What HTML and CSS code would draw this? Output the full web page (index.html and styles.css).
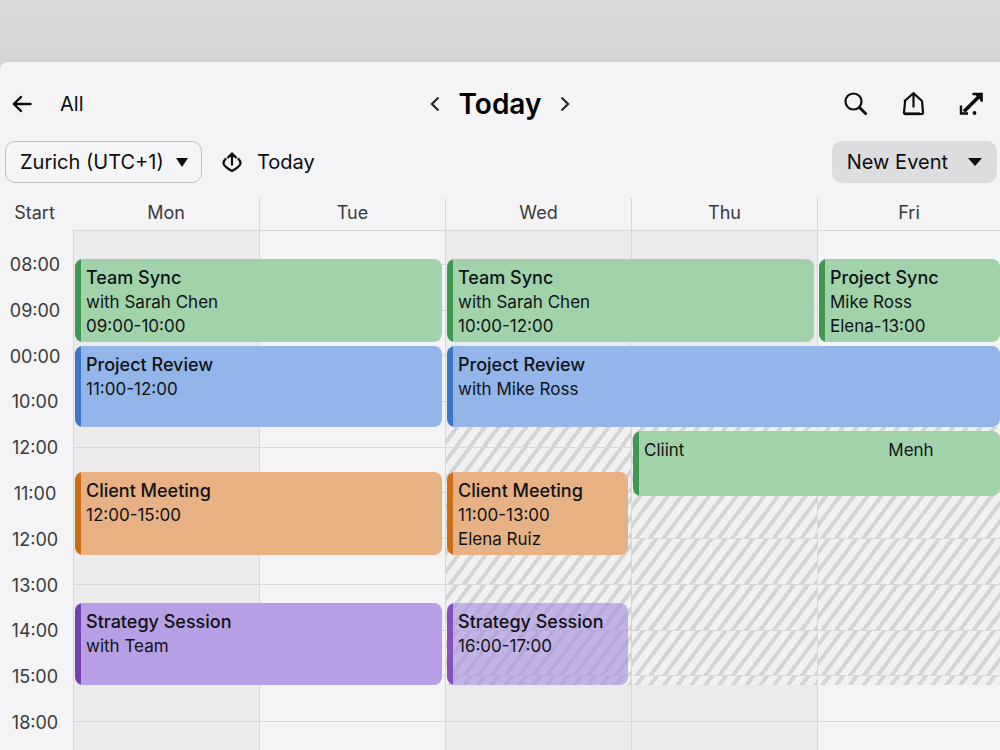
FILE: index.html
```html
<!DOCTYPE html>
<html lang="en">
<head>
<meta charset="utf-8">
<meta name="viewport" content="width=device-width, initial-scale=1">
<title>Calendar</title>
<link rel="stylesheet" href="styles.css">
</head>
<body>
<main class="panel">
  <header class="topbar">
    <div class="topbar-left">
      <button class="icon-button" aria-label="Back">
        <svg width="22" height="22" viewBox="0 0 22 22" fill="none" stroke="currentColor" stroke-width="2.4" stroke-linejoin="round" stroke-linecap="round"><path d="M18.500 11H2M9 4L1.800 11 9 18"/></svg>
      </button>
      <a class="all-link" href="#">All</a>
    </div>
    <div class="topbar-title">
      <button class="icon-button chevron" aria-label="Previous">
        <svg width="12" height="18" viewBox="0 0 12 18" fill="none" stroke="currentColor" stroke-width="2.400"><path d="M9.500 2.500L3 9l6.500 6.500"/></svg>
      </button>
      <h1>Today</h1>
      <button class="icon-button chevron" aria-label="Next">
        <svg width="12" height="18" viewBox="0 0 12 18" fill="none" stroke="currentColor" stroke-width="2.400"><path d="M2.500 2.500L9 9l-6.500 6.500"/></svg>
      </button>
    </div>
    <div class="topbar-actions">
      <button class="icon-button" aria-label="Search">
        <svg width="26" height="26" viewBox="0 0 26 26" fill="none" stroke="currentColor" stroke-width="2.200"><circle cx="11.500" cy="10.500" r="8"/><path d="M17 16l7.500 7.500" stroke-width="2.800"/></svg>
      </button>
      <button class="icon-button" aria-label="Share">
        <svg width="26" height="26" viewBox="0 0 26 26" fill="none" stroke="currentColor" stroke-width="2.200"><path d="M13.500 16.500V3M4 10.500L13.500 2.200l9 8.300M5.200 9.500L4 21.500Q4 23 5.500 23H21.500Q23 23 23 21.500L22 9.500"/><path d="M4.500 22.800H20" stroke-width="2.800"/></svg>
      </button>
      <button class="icon-button" aria-label="Expand">
        <svg width="26" height="26" viewBox="0 0 26 26" fill="none" stroke="currentColor" stroke-width="2.400"><path d="M6 20.500L21 5.500" stroke-width="3.600"/><path d="M14.500 3H23.500V10.500M3 14.500V22.500H10"/><path d="M24.500 2v9l-9-9z" fill="currentColor" stroke="none"/><circle cx="16.500" cy="22" r="1.900" fill="currentColor" stroke="none"/></svg>
      </button>
    </div>
  </header>

  <div class="toolbar">
    <div class="zone">
      <select class="zone-select" aria-label="Time zone"><option>Zurich (UTC+1)</option></select>
      <svg class="zone-caret" width="12" height="9" viewBox="0 0 12 9"><path d="M0 0h12L6 9z" fill="currentColor"/></svg>
    </div>
    <button class="today-button">
      <svg width="22" height="22" viewBox="0 0 22 22" fill="none" stroke="currentColor" stroke-width="2.200"><path d="M11 14.500V3M6.500 7L11 2.500 15.500 7M5.500 7.500Q2.500 9 2.500 12.500 3 15.500 11 20 19 15.500 19.500 12.500 19.500 9 16.500 7.500"/></svg>
      Today
    </button>
    <button class="new-event">
      New Event
      <svg width="14" height="8" viewBox="0 0 14 8"><path d="M0 0h14L7 8z" fill="currentColor"/></svg>
    </button>
  </div>

  <section class="calendar" aria-label="Week">
    <div class="days">
      <span class="start">Start</span>
      <span>Mon</span><span>Tue</span><span>Wed</span><span>Thu</span><span>Fri</span>
    </div>
    <div class="times">
      <time>08:00</time><time>09:00</time><time>00:00</time><time>10:00</time><time>12:00</time><time>11:00</time><time>12:00</time><time>13:00</time><time>14:00</time><time>15:00</time><time>18:00</time>
    </div>
    <div class="board">
      <div class="layer columns"><i class="shade"></i><i></i><i class="shade"></i><i class="shade"></i><i></i></div>
      <div class="layer schedule">
        <div class="hatch wed"><i></i><i></i><i></i><i></i><i></i><i></i><i></i></div>
        <div class="hatch thu"><i></i><i></i><i></i><i></i><i></i><i></i><i></i></div>
        <div class="hatch fri"><i></i><i></i><i></i><i></i><i></i><i></i><i></i></div>
      </div>
      <div class="layer lines"><i></i><i></i><i></i><i></i><i></i><i></i><i></i><i></i><i></i><i></i><i></i></div>
      <div class="layer schedule">
        <article class="event green mon-tue sync"><h2>Team Sync</h2><p>with Sarah Chen</p><p>09:00-10:00</p></article>
        <article class="event green wed-thu sync"><h2>Team Sync</h2><p>with Sarah Chen</p><p>10:00-12:00</p></article>
        <article class="event green fri sync to-edge"><h2>Project Sync</h2><p>Mike Ross</p><p>Elena-13:00</p></article>
        <article class="event blue mon-tue review"><h2>Project Review</h2><p>11:00-12:00</p></article>
        <article class="event blue wed-fri review to-edge"><h2>Project Review</h2><p>with Mike Ross</p></article>
        <article class="event green thu-fri client to-edge split"><p>Cliint</p><p class="middle">Menh</p></article>
        <article class="event orange mon-tue meeting"><h2>Client Meeting</h2><p>12:00-15:00</p></article>
        <article class="event orange wed meeting"><h2>Client Meeting</h2><p>11:00-13:00</p><p>Elena Ruiz</p></article>
        <article class="event purple mon-tue strategy"><h2>Strategy Session</h2><p>with Team</p></article>
        <article class="event purple-clear wed strategy"><h2>Strategy Session</h2><p>16:00-17:00</p></article>
      </div>
    </div>
  </section>
</main>
</body>
</html>
```

FILE: styles.css
```css
* { box-sizing: border-box; }

body {
  margin: 0;
  min-height: 100vh;
  padding-top: 62px;
  display: flex;
  flex-direction: column;
  background: linear-gradient(#dadada, #d5d5d5 62px);
  color: #0c0c0d;
  font-family: Inter, "Liberation Sans", sans-serif;
  font-size: 20px;
}

h1, h2, p { margin: 0; }
button, select { font: inherit; color: inherit; }

.panel {
  flex: 1;
  display: flex;
  flex-direction: column;
  background: #f4f4f6;
  border-top-left-radius: 8px;
}

.topbar {
  display: grid;
  grid-template-columns: 1fr auto 1fr;
  align-items: center;
  height: 80px;
  padding: 4px 12px 0;
}
.topbar-left { display: flex; align-items: center; gap: 26px; }
.all-link { color: inherit; text-decoration: none; }
.topbar-title { display: flex; align-items: center; gap: 18px; }
.topbar-title h1 { font-size: 28px; line-height: 36px; font-weight: 600; color: #000; }
.topbar-actions { display: flex; justify-content: flex-end; gap: 32px; padding-right: 4px; }
.icon-button {
  display: flex;
  padding: 0;
  border: 0;
  background: none;
}
.chevron { color: #303032; }

.toolbar {
  display: flex;
  align-items: center;
  height: 40px;
  padding: 0 3px 0 5px;
}
.zone { display: grid; align-items: center; }
.zone-select, .zone-caret { grid-area: 1 / 1; }
.zone-select {
  appearance: none;
  height: 42px;
  width: 197px;
  padding: 0 32px 0 14px;
  border: 1px solid #bdbdc0;
  border-radius: 10px;
  background: #f5f5f7;
}
.zone-caret { justify-self: end; margin-right: 14px; pointer-events: none; }
.today-button {
  display: flex;
  align-items: center;
  gap: 14px;
  margin-left: 19px;
  padding: 0;
  border: 0;
  background: none;
}
.new-event {
  display: flex;
  align-items: center;
  gap: 20px;
  height: 42px;
  margin-left: auto;
  padding: 0 15px;
  border: 0;
  border-radius: 10px;
  background: #dddcdf;
}

.calendar {
  flex: 1;
  display: grid;
  grid-template-columns: 73px 1fr;
  grid-template-rows: 32px 1fr;
  margin-top: 16px;
  font-size: 18px;
  color: #3a3a3c;
}
.days {
  grid-column: 1 / -1;
  display: grid;
  grid-template-columns: 73px repeat(4, 186fr) 183fr;
  line-height: 29px;
  text-align: center;
}
.days span + span + span { border-left: 1px solid #d6d7d9; }
.start { padding-right: 4px; }

.times, .lines {
  display: grid;
  grid-template-rows: 34fr repeat(10, 46fr) 28fr;
}
.times { padding-right: 3px; text-align: center; }
.times time { align-self: end; height: 12px; line-height: 26px; }

.board { display: grid; border-top: 1px solid #d6d7d9; }
.layer { grid-area: 1 / 1; }
.columns, .schedule {
  display: grid;
  grid-template-columns: repeat(4, 186fr) 183fr;
}
.columns i { border-left: 1px solid #d6d7d9; }
.columns .shade { background: #ebebec; }
.lines i { border-bottom: 1px solid #d6d8db; }

.schedule {
  grid-template-rows: 28fr 83fr 4fr 81fr 4fr 41fr 24fr 59fr 48fr 82fr 65fr;
}
.mon-tue { grid-column: 1 / 3; }
.wed { grid-column: 3; }
.wed-thu { grid-column: 3 / 5; }
.wed-fri { grid-column: 3 / 6; }
.thu { grid-column: 4; }
.thu-fri { grid-column: 4 / 6; }
.fri { grid-column: 5; }
.sync { grid-row: 2; }
.review { grid-row: 4; }
.client { grid-row: 6 / 8; }
.meeting { grid-row: 7 / 9; }
.strategy { grid-row: 10; }

.hatch {
  grid-row: 5 / 11;
  display: grid;
  grid-template-rows: 19fr 46fr 46fr 46fr 46fr 46fr 9fr;
  margin-left: 1px;
}
.hatch i {
  background: repeating-linear-gradient(127deg, #f1f1f2 0 7px, #d3d4d5 7px 11px);
}

.event {
  margin: 0 3px 0 2px;
  padding: 7px 8px 0 11px;
  border-radius: 8px;
  background: linear-gradient(to right, var(--bar) 6px, var(--fill) 6px);
  color: #101214;
  font-size: 17px;
  line-height: 24px;
}
.event h2 { font-size: 18px; font-weight: 500; }
.to-edge { margin-right: 0; }
.split { display: grid; grid-template-columns: 1fr 1fr; padding-right: 0; }
.middle { text-align: center; }
.green { --bar: #3c9a50; --fill: #a2d2aa; }
.blue { --bar: #3a77c8; --fill: #94b5ea; }
.orange { --bar: #d06c14; --fill: #e8b184; }
.purple { --bar: #7440b2; --fill: #b89ee4; }
.purple-clear { --bar: #8450be; --fill: rgba(168, 140, 222, 0.62); }
```
